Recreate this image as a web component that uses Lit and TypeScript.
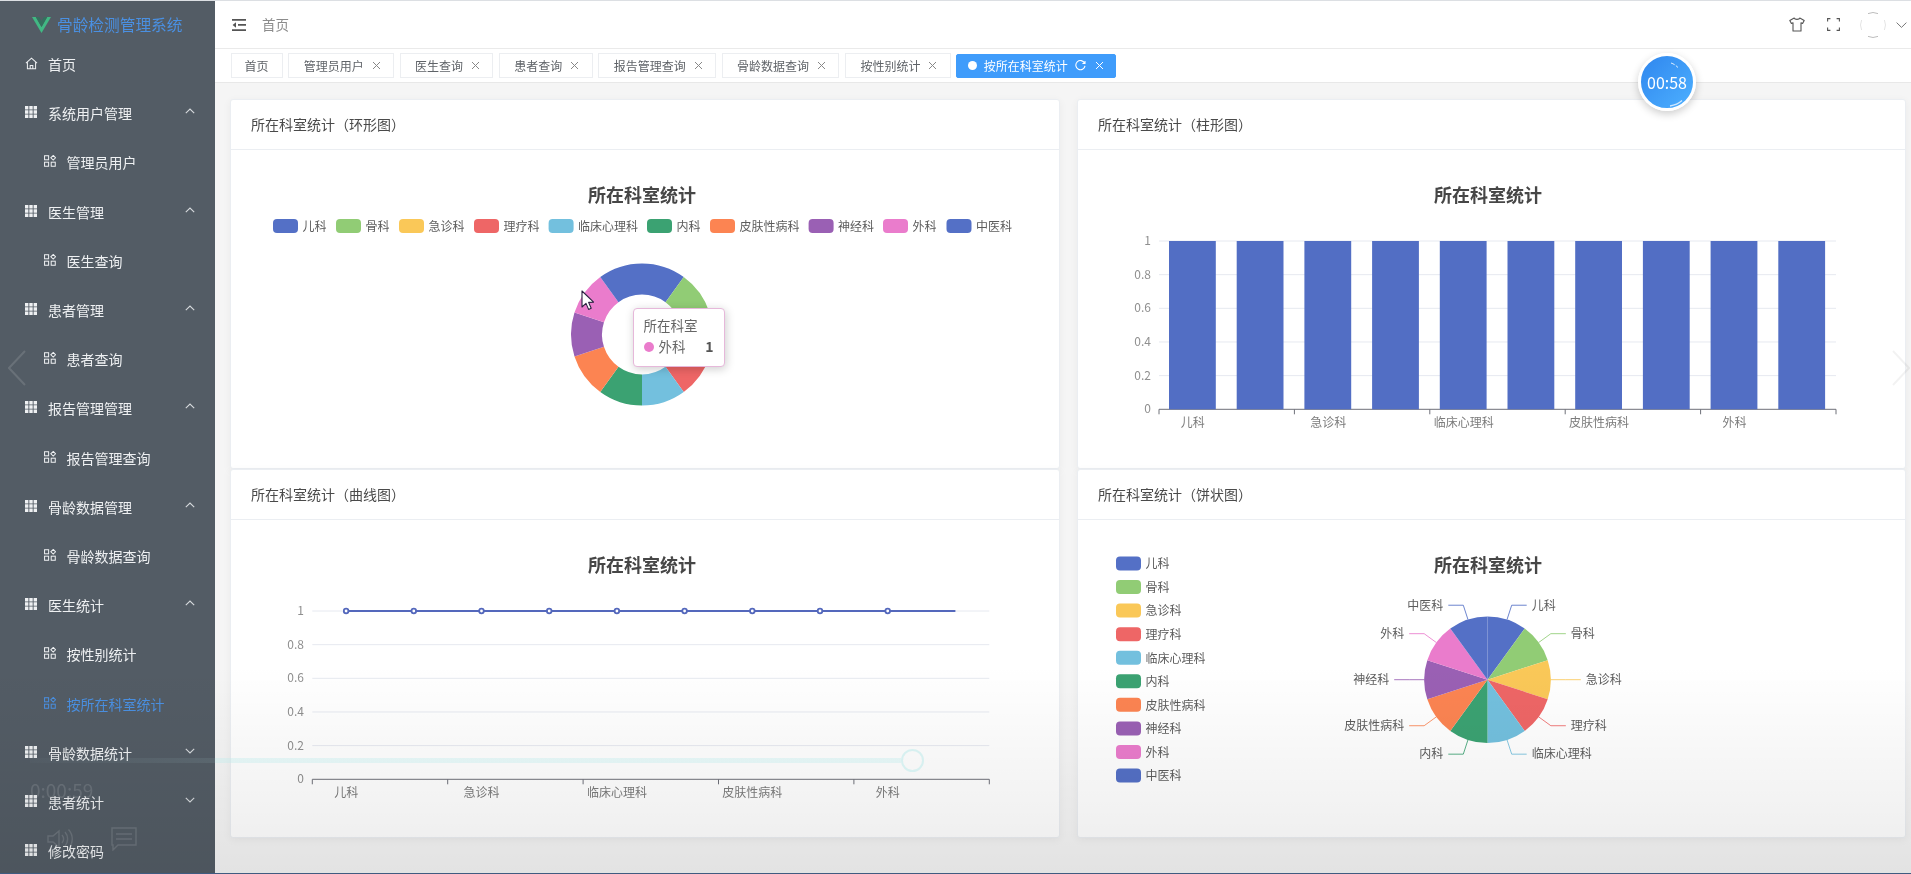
import { LitElement, html, css, svg } from "lit";
import { customElement } from "lit/decorators.js";

const COLORS = ["#5470c6", "#91cc75", "#fac858", "#ee6666", "#73c0de", "#3ba272", "#fc8452", "#9a60b4", "#ea7ccc", "#5470c6"];
const NAMES = ["儿科", "骨科", "急诊科", "理疗科", "临床心理科", "内科", "皮肤性病科", "神经科", "外科", "中医科"];
const TITLE = "所在科室统计";

type Row = { t: string; kind: "home" | "group" | "sub"; open?: boolean; active?: boolean; noArrow?: boolean };
const MENU: Row[] = [
  { t: "首页", kind: "home" },
  { t: "系统用户管理", kind: "group", open: true },
  { t: "管理员用户", kind: "sub" },
  { t: "医生管理", kind: "group", open: true },
  { t: "医生查询", kind: "sub" },
  { t: "患者管理", kind: "group", open: true },
  { t: "患者查询", kind: "sub" },
  { t: "报告管理管理", kind: "group", open: true },
  { t: "报告管理查询", kind: "sub" },
  { t: "骨龄数据管理", kind: "group", open: true },
  { t: "骨龄数据查询", kind: "sub" },
  { t: "医生统计", kind: "group", open: true },
  { t: "按性别统计", kind: "sub" },
  { t: "按所在科室统计", kind: "sub", active: true },
  { t: "骨龄数据统计", kind: "group", open: false },
  { t: "患者统计", kind: "group", open: false },
  { t: "修改密码", kind: "group", noArrow: true },
];
const TAGS = ["管理员用户", "医生查询", "患者查询", "报告管理查询", "骨龄数据查询", "按性别统计"];

const homeIcon = html`<svg class="ic" viewBox="0 0 14 14" fill="none" stroke="currentColor" stroke-width="1.1"><path d="M1 6.600 7 1.200l6 5.400M2.600 5.600V12.600h8.800V5.600M5.600 12.600V9.200h2.800v3.400"/></svg>`;
const gridIcon = html`<svg class="ic" viewBox="0 0 12 12" fill="currentColor"><path d="M0 0h3.400v3.400H0zM4.300 0h3.400v3.400H4.300zM8.600 0H12v3.400H8.600zM0 4.300h3.400v3.400H0zM4.300 4.300h3.400v3.400H4.300zM8.600 4.300H12v3.400H8.600zM0 8.600h3.400V12H0zM4.300 8.600h3.400V12H4.300zM8.600 8.600H12V12H8.600z"/></svg>`;
const subIcon = html`<svg class="ic" viewBox="0 0 13 13" fill="none" stroke="currentColor" stroke-width="1.1"><rect x=".6" y=".8" width="4.400" height="4.400"/><rect x=".6" y="7.800" width="4.400" height="4.400"/><rect x="7.800" y="7.800" width="4.400" height="4.400"/><path d="M10 .5 12.600 3 10 5.500 7.400 3z"/></svg>`;
const arrowUp = html`<svg class="chev" viewBox="0 0 10 6" fill="none" stroke="currentColor" stroke-width="1.1"><path d="M.8 5.200 5 1l4.200 4.200"/></svg>`;
const arrowDown = html`<svg class="chev" viewBox="0 0 10 6" fill="none" stroke="currentColor" stroke-width="1.1"><path d="M.8.8 5 5 9.200.8"/></svg>`;
const closeX = html`<svg class="x" viewBox="0 0 9 9" fill="none" stroke="currentColor" stroke-width="1"><path d="M1 1l7 7M8 1 1 8"/></svg>`;

function pt(cx: number, cy: number, r: number, deg: number): [number, number] {
  const a = (deg * Math.PI) / 180;
  return [cx + r * Math.sin(a), cy - r * Math.cos(a)];
}
function sector(cx: number, cy: number, r0: number, r1: number, a0: number, a1: number) {
  const [x1, y1] = pt(cx, cy, r1, a0);
  const [x2, y2] = pt(cx, cy, r1, a1);
  if (r0 === 0) return `M${cx} ${cy}L${x1} ${y1}A${r1} ${r1} 0 0 1 ${x2} ${y2}Z`;
  const [x3, y3] = pt(cx, cy, r0, a1);
  const [x4, y4] = pt(cx, cy, r0, a0);
  return `M${x1} ${y1}A${r1} ${r1} 0 0 1 ${x2} ${y2}L${x3} ${y3}A${r0} ${r0} 0 0 0 ${x4} ${y4}Z`;
}
function legendSwatch(x: number, y: number, i: number) {
  return svg`<rect x=${x} y=${y - 7} width="25" height="14" rx="4" fill=${COLORS[i]}/>`;
}
function chartTitle(x: number, y: number) {
  return svg`<text class="title" x=${x} y=${y - 1.5} text-anchor="middle" dominant-baseline="central">${TITLE}</text>`;
}
function axes(x0: number, yTop: number, yLabelX: number) {
  const ys = [1, 0.8, 0.6, 0.4, 0.2, 0];
  const h = 168.3;
  const w = 677;
  const step = w / 10;
  const yBot = yTop + h;
  return svg`
    ${ys.map((v) => {
      const y = yTop + (1 - v) * h;
      return svg`
        ${v > 0 ? svg`<line x1=${x0} x2=${x0 + w} y1=${y} y2=${y} stroke="#e6e9f0"/>` : null}
        <text class="ylab" x=${yLabelX} y=${y - 1.5} text-anchor="end" dominant-baseline="central">${v}</text>`;
    })}
    <line x1=${x0} x2=${x0 + w} y1=${yBot} y2=${yBot} stroke="#6e7079"/>
    ${[0, 2, 4, 6, 8, 10].map((k) => svg`<line x1=${x0 + k * step} x2=${x0 + k * step} y1=${yBot} y2=${yBot + 5} stroke="#6e7079"/>`)}
    ${[0, 2, 4, 6, 8].map((k) => svg`<text class="xlab" x=${x0 + (k + 0.5) * step} y=${yBot + 12} text-anchor="middle" dominant-baseline="central">${NAMES[k]}</text>`)}
  `;
}

function donutChart() {
  const xs = [273, 336, 399, 474, 548.6, 647, 710, 808.6, 883, 946.5];
  return html`<svg class="chart" viewBox="231 150 828 318" preserveAspectRatio="xMinYMin">
    ${chartTitle(642, 195)}
    ${NAMES.map(
      (n, i) => svg`${legendSwatch(xs[i], 226, i)}<text class="leg" x=${xs[i] + 29.5} y="225" dominant-baseline="central">${n}</text>`
    )}
    ${NAMES.map((_, i) => svg`<path d=${sector(642, 334.5, 40, 71, i * 36, (i + 1) * 36)} fill=${COLORS[i]}/>`)}
  </svg>`;
}
function barChart() {
  const x0 = 1159;
  const step = 67.7;
  return html`<svg class="chart" viewBox="1078 150 827 318" preserveAspectRatio="xMinYMin">
    ${chartTitle(1488, 195)}
    ${axes(x0, 241, 1151)}
    ${NAMES.map((_, i) => svg`<rect x=${x0 + 10 + i * step} y="241" width="46.8" height="168.3" fill="#526ec4"/>`)}
  </svg>`;
}
function lineChart() {
  const x0 = 312.3;
  const step = 67.7;
  return html`<svg class="chart" viewBox="231 520 828 317" preserveAspectRatio="xMinYMin">
    ${chartTitle(642, 565)}
    ${axes(x0, 611, 304)}
    <line x1=${x0 + 33.8} x2=${x0 + 33.8 + 9 * step} y1="611" y2="611" stroke="#5468bc" stroke-width="2.2"/>
    ${NAMES.slice(0, 9).map((_, i) => svg`<circle cx=${x0 + 33.8 + i * step} cy="611" r="2.3" fill="#fff" stroke="#5468bc" stroke-width="1.8"/>`)}
  </svg>`;
}
function pieChart() {
  const cx = 1487.5;
  const cy = 679.7;
  const r = 63.3;
  return html`<svg class="chart" viewBox="1078 520 827 317" preserveAspectRatio="xMinYMin">
    ${chartTitle(1488, 565)}
    ${NAMES.map((n, i) => {
      const y = 564 + i * 23.56;
      return svg`${legendSwatch(1116, y - 0.5, i)}<text class="leg" x="1145.5" y=${y - 1.2} dominant-baseline="central">${n}</text>`;
    })}
    ${NAMES.map((_, i) => svg`<path d=${sector(cx, cy, 0, r, i * 36, (i + 1) * 36)} fill=${COLORS[i]}/>`)}
    ${NAMES.map((n, i) => {
      const mid = i * 36 + 18;
      const [ax, ay] = pt(cx, cy, r, mid);
      const [bx, by] = pt(cx, cy, r + 15, mid);
      const right = mid < 180;
      const ex = bx + (right ? 15 : -15);
      return svg`<path class="lead" d="M${ax} ${ay}L${bx} ${by}L${ex} ${by}" fill="none" stroke=${COLORS[i]}/>
        <text class="leg" x=${ex + (right ? 5 : -5)} y=${by - 1.2} text-anchor=${right ? "start" : "end"} dominant-baseline="central">${n}</text>`;
    })}
  </svg>`;
}

@customElement("app-root")
export class AppRoot extends LitElement {
  static styles = css`
    :host {
      display: block;
      width: 1911px;
      height: 874px;
      overflow: hidden;
      font-family: "Noto Sans CJK SC", "Noto Sans", sans-serif;
      color: #555;
      background: #f5f5f5;
    }
    .shell {
      position: relative;
      display: flex;
      width: 1911px;
      height: 874px;
      box-sizing: border-box;
      border-top: 1px solid #dcdfe3;
      overflow: hidden;
      background: #f5f5f5;
      filter: blur(0.4px);
    }
    .side {
      flex: 0 0 215px;
      background: #535c65;
      color: #eef0f2;
      font-size: 14px;
      overflow: hidden;
    }
    .logo {
      display: flex;
      align-items: center;
      gap: 6px;
      box-sizing: border-box;
      height: 38.5px;
      padding: 9px 0 0 32px;
      color: #4a90e2;
      font-size: 15.7px;
      white-space: nowrap;
    }
    .logo svg { width: 19px; height: 16px; flex: none; }
    .row {
      display: flex;
      align-items: center;
      height: 49.2px;
      box-sizing: border-box;
      padding: 0 20px 0 25px;
      white-space: nowrap;
    }
    .row.sub { padding-left: 44px; }
    .row.active { color: #4a90e2; }
    .row .ic { width: 12px; height: 12px; margin: 0 11px 2px 0; flex: none; }
    .row.sub .ic { margin-right: 10.5px; }
    .row.home .ic { width: 13px; height: 13px; margin-right: 10px; }
    .chev { width: 10px; height: 6px; margin: 0 0 4px auto; flex: none; opacity: .85; }
    .main { flex: 1; display: flex; flex-direction: column; min-width: 0; }
    .top {
      flex: 0 0 47px;
      display: flex;
      align-items: center;
      background: #fff;
      border-bottom: 1px solid #eaeaea;
      padding: 0 4px 0 17px;
    }
    .fold { width: 14px; height: 12px; color: #555; flex: none; margin-right: 16px; }
    .crumb { font-size: 13.5px; color: #8c8c8c; margin-bottom: 2px; }
    .tools { margin-left: auto; display: flex; align-items: center; color: #555; }
    .tools svg { display: block; }
    .shirt { width: 16px; height: 15px; margin-right: 22px; }
    .full { width: 13px; height: 13px; margin-right: 20px; }
    .ava { width: 26px; height: 26px; margin-right: 10px; }
    .drop { width: 11px; height: 6px; color: #777; margin-right: 0; }
    .tags {
      flex: 0 0 34px;
      display: flex;
      align-items: center;
      gap: 5.65px;
      box-sizing: border-box;
      background: #fff;
      border-bottom: 1px solid #e8e8e8;
      padding-left: 15.5px;
    }
    .tag {
      display: flex;
      align-items: center;
      height: 25px;
      box-sizing: border-box;
      font-size: 12px;
      color: #5f6368;
      background: #fff;
      border: 1px solid #eceef1;
      padding: 0 12.2px 0.5px 14.5px;
      gap: 8px;
      white-space: nowrap;
    }
    .tag.plain { padding: 0 13px 0.5px; }
    .x { width: 9px; height: 9px; flex: none; color: #888; }
    .tag.on {
      height: 24px;
      background: #3f9cfb;
      border-color: #3f9cfb;
      color: #fff;
      border-radius: 2px;
      padding: 0 11.5px 0.5px 10.5px;
      gap: 7px;
    }
    .tag.on .x { color: #fff; margin-left: 2px; }
    .dot { width: 9px; height: 9px; border-radius: 50%; background: #fff; flex: none; }
    .re { width: 11px; height: 11px; flex: none; }
    .grid {
      flex: 1;
      display: grid;
      grid-template-columns: 830px 829px;
      grid-template-rows: 370px 369px;
      column-gap: 17px;
      padding: 16px 5px 0 15px;
    }
    .card {
      position: relative;
      display: flex;
      flex-direction: column;
      background: #fff;
      border: 1px solid #ebeef2;
      box-sizing: border-box;
      border-radius: 3px;
      box-shadow: 0 2px 8px rgba(0, 0, 0, .05);
      overflow: hidden;
    }
    .head {
      flex: 0 0 50px;
      display: flex;
      align-items: center;
      box-sizing: border-box;
      padding: 0 0 2px 20px;
      border-bottom: 1px solid #ebeef2;
      font-size: 14px;
      color: #4a4a4a;
    }
    .chart { display: block; width: 100%; flex: 1; min-height: 0; }
    .title { font-size: 18px; font-weight: 700; fill: #464646; }
    .leg { font-size: 12px; fill: #5c5c5c; }
    .ylab { font-size: 12px; fill: #8f8f8f; }
    .xlab { font-size: 12px; fill: #7b7b7b; }
    .lead { opacity: .85; }
    .tip {
      position: absolute;
      left: 401.5px;
      top: 208px;
      width: 92px;
      height: 59px;
      box-sizing: border-box;
      padding: 6px 10px;
      background: #fff;
      border: 1px solid #e6b8da;
      border-radius: 4px;
      box-shadow: 1px 2px 10px rgba(0, 0, 0, .2);
      font-size: 13.5px;
      line-height: 21px;
      color: #666;
    }
    .tipRow { display: flex; align-items: center; }
    .tipDot { width: 10px; height: 10px; border-radius: 50%; background: #ea7ccc; margin-right: 5px; }
    .tipVal { margin-left: auto; font-weight: 700; color: #555; font-size: 14px; }
    .cursor { position: absolute; left: 581px; top: 289px; width: 13px; height: 21px; }
    .timer {
      position: absolute;
      left: 1638px;
      top: 52px;
      width: 58px;
      height: 58px;
      box-sizing: border-box;
      border: 3px solid #fff;
      border-radius: 50%;
      background: linear-gradient(135deg, #2f86ee, #4db0ff);
      box-shadow: 0 3px 8px rgba(0, 0, 0, .2);
      color: #fff;
      font-size: 16px;
      display: flex;
      align-items: center;
      justify-content: center;
    }
    .timer svg { position: absolute; inset: -3px; width: 58px; height: 58px; }
    .fade {
      position: absolute;
      left: 0;
      right: 0;
      bottom: 0;
      height: 210px;
      background: linear-gradient(rgba(0, 0, 0, 0), rgba(0, 0, 0, .075));
      pointer-events: none;
    }
    .edge { position: absolute; left: 0; right: 0; bottom: 0; height: 1.5px; background: #3f5b80; }
    .track {
      position: absolute;
      left: 30px;
      top: 757px;
      width: 871px;
      height: 5px;
      background: linear-gradient(90deg, rgba(190, 235, 235, .02) 0%, rgba(190, 235, 235, .09) 21.2%, rgba(190, 235, 235, .38) 21.2%);
    }
    .knob {
      position: absolute;
      left: 901px;
      top: 748px;
      width: 23px;
      height: 23px;
      box-sizing: border-box;
      border: 2px solid rgba(190, 235, 235, .55);
      border-radius: 50%;
    }
    .clock { position: absolute; left: 30px; top: 776px; font-size: 19px; color: rgba(255, 255, 255, .12); line-height: 26px; }
    .ctl { position: absolute; left: 46px; top: 826px; width: 92px; height: 24px; color: rgba(255, 255, 255, .13); }
    .nav { position: absolute; top: 349px; width: 18px; height: 36px; }
    .nav.l { left: 8px; color: rgba(255, 255, 255, .13); }
    .nav.r { left: 1892px; color: rgba(0, 0, 0, .05); }
  `;

  render() {
    return html`<div class="shell">
      <aside class="side">
        <div class="logo">
          <svg viewBox="0 0 19 16"><path d="M0 0h3.800L9.500 10 15.200 0H19L9.500 16z" fill="#41b883"/><path d="M3.800 0h3.400l2.300 4 2.300-4h3.400L9.500 10z" fill="#35705e"/></svg>
          <span>骨龄检测管理系统</span>
        </div>
        ${MENU.map(
          (m) => html`<div class="row ${m.kind} ${m.active ? "active" : ""}">
            ${m.kind === "home" ? homeIcon : m.kind === "sub" ? subIcon : gridIcon}
            <span>${m.t}</span>
            ${m.kind === "group" && !m.noArrow ? (m.open ? arrowUp : arrowDown) : null}
          </div>`
        )}
      </aside>
      <div class="main">
        <div class="top">
          <svg class="fold" viewBox="0 0 14 12" fill="currentColor"><path d="M0 0h14v1.700H0zM6 5.100h8v1.700H6zM0 10.300h14V12H0zM4 3.300v5.400L.6 6z"/></svg>
          <span class="crumb">首页</span>
          <div class="tools">
            <svg class="shirt" viewBox="0 0 16 15" fill="none" stroke="currentColor" stroke-width="1.1" stroke-linejoin="round"><path d="M5.200 1 .8 3.400l1.600 3 1.600-.7V14h8V5.700l1.600.7 1.600-3L10.800 1C10.300 2.800 5.700 2.800 5.200 1z"/></svg>
            <svg class="full" viewBox="0 0 13 13" fill="none" stroke="currentColor" stroke-width="1.1"><path d="M.6 3.400V.6h2.800M9.600.6h2.800v2.800M12.400 9.600v2.800H9.600M3.400 12.400H.6V9.600"/></svg>
            <svg class="ava" viewBox="0 0 26 26" fill="none" stroke-width="1">
              <path d="M8 1.600A12.400 12.400 0 0 1 18 1.600M18 24.400A12.400 12.400 0 0 1 8 24.400" stroke="#bdbdbd"/>
              <path d="M1.600 8A12.400 12.400 0 0 0 1.600 18M24.400 8A12.400 12.400 0 0 1 24.400 18" stroke="#e4e4e4"/>
            </svg>
            <svg class="drop" viewBox="0 0 11 6" fill="none" stroke="currentColor" stroke-width="1"><path d="M.6.6 5.500 5.400 10.400.6"/></svg>
          </div>
        </div>
        <div class="tags">
          <div class="tag plain">首页</div>
          ${TAGS.map((t) => html`<div class="tag">${t}${closeX}</div>`)}
          <div class="tag on">
            <span class="dot"></span>按所在科室统计
            <svg class="re" viewBox="0 0 11 11" fill="none" stroke="currentColor" stroke-width="1.1"><path d="M9.600 3.200A4.600 4.600 0 1 0 10 5.800M10 .9v2.600H7.400"/></svg>
            ${closeX}
          </div>
        </div>
        <div class="grid">
          <section class="card">
            <div class="head">所在科室统计（环形图）</div>
            ${donutChart()}
            <div class="tip">
              <div>所在科室</div>
              <div class="tipRow"><span class="tipDot"></span>外科<span class="tipVal">1</span></div>
            </div>
          </section>
          <section class="card">
            <div class="head">所在科室统计（柱形图）</div>
            ${barChart()}
          </section>
          <section class="card">
            <div class="head">所在科室统计（曲线图）</div>
            ${lineChart()}
          </section>
          <section class="card">
            <div class="head">所在科室统计（饼状图）</div>
            ${pieChart()}
          </section>
        </div>
      </div>
      <svg class="cursor" viewBox="0 0 13 21"><path d="M1 1v16l4-3.600 2.600 6 2.600-1.100-2.600-5.900 5-.3z" fill="#fff" stroke="#2a2140" stroke-width="1.1" stroke-linejoin="round"/></svg>
      <div class="timer">
        00:58
        <svg viewBox="0 0 58 58" fill="none"><path d="M33 10c3 1 5 2.500 7 4.500" stroke="#dff0ff" stroke-width="1" stroke-dasharray="4 1.500"/><path d="M32 53c5-.8 9-2.800 12-5.500" stroke="#cfe7ff" stroke-width="1.400"/></svg>
      </div>
      <svg class="nav l" viewBox="0 0 18 36" fill="none" stroke="currentColor" stroke-width="2"><path d="M17 1 1 18l16 17"/></svg>
      <svg class="nav r" viewBox="0 0 18 36" fill="none" stroke="currentColor" stroke-width="2"><path d="M1 1l16 17L1 35"/></svg>
      <div class="fade"></div>
      <div class="track"></div>
      <div class="knob"></div>
      <div class="clock">0:00:59</div>
      <svg class="ctl" viewBox="0 0 92 24" fill="none" stroke="currentColor" stroke-width="1.400">
        <path d="M2 9h5l6-5v16l-6-5H2zM16 8c2 2.500 2 5.500 0 8M19 5c3.500 4 3.500 10 0 14M22.500 2.500c5 5.500 5 13.500 0 19"/>
        <path d="M66 1h24v17H72l-5 5v-5h-1zM70 7h16M70 12h16"/>
      </svg>
      <div class="edge"></div>
    </div>`;
  }
}
